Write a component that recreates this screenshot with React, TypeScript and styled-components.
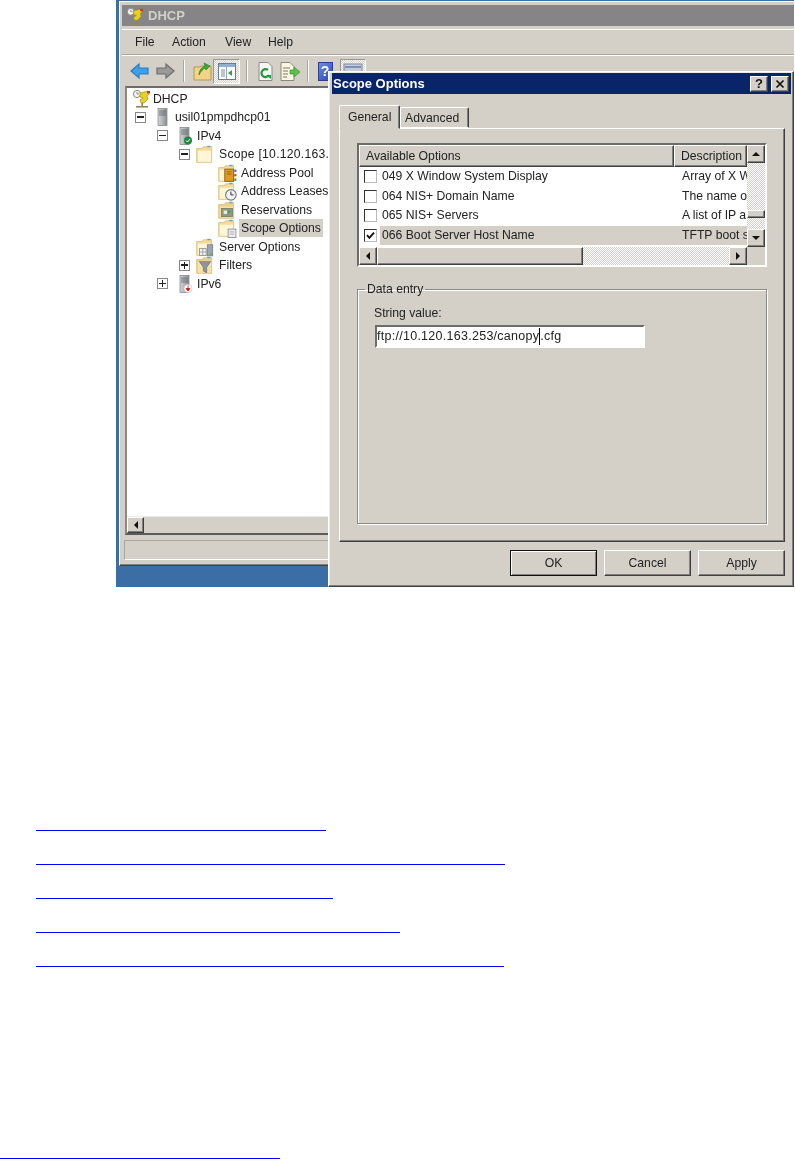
import React from 'react';
import styled, { createGlobalStyle, css } from 'styled-components';

const GlobalStyle = createGlobalStyle`
  html, body {
    margin: 0;
    padding: 0;
    background: #fff;
    overflow: hidden;
  }
`;

const FACE = '#d4d0c8';
const FONT = `'Liberation Sans', Arial, sans-serif`;

const raised = css`
  background: ${FACE};
  border: 1px solid;
  border-color: #fff #404040 #404040 #fff;
  box-shadow: inset -1px -1px #808080;
  box-sizing: border-box;
`;

const dithered = css`
  background-color: #fff;
  background-image: conic-gradient(#d4d0c8 25%, #fff 0 50%, #d4d0c8 0 75%, #fff 0);
  background-size: 2px 2px;
`;

const Page = styled.div`
  width: 795px;
  height: 1159px;
  font-family: ${FONT};
  color: #222;
`;

const Desktop = styled.div`
  position: relative;
  width: 678px;
  height: 587px;
  margin-left: 116px;
  background: #3a6ea5;
  overflow: hidden;
  filter: blur(0.4px);
`;

/* main console window */
const Window = styled.div`
  ${raised}
  position: absolute;
  left: 3px;
  top: 1px;
  width: 700px;
  height: 565px;
  padding: 3px 3px 3px 2px;
  display: flex;
  flex-direction: column;
`;

const WinTitle = styled.div`
  height: 21px;
  flex: none;
  background: #868486;
  color: ${FACE};
  font-size: 13px;
  font-weight: bold;
  display: flex;
  align-items: center;
  gap: 4px;
  padding-left: 4px;
`;

const MenuBar = styled.div`
  height: 26px;
  flex: none;
  margin-top: 3px;
  box-sizing: border-box;
  border-top: 1px solid #fff;
  border-bottom: 1px solid #a8a6a0;
  display: flex;
  align-items: center;
  padding-left: 13px;
  font-size: 12.2px;
`;

const MenuItem = styled.span<{ $w: number }>`
  width: ${({ $w }) => $w}px;
`;

const ToolBar = styled.div`
  height: 31px;
  flex: none;
  box-sizing: border-box;
  border-top: 1px solid #fff;
  display: flex;
  align-items: center;
  padding-left: 8px;
`;

const ToolSlot = styled.span<{ $w: number; $pressed?: boolean }>`
  width: ${({ $w }) => $w}px;
  height: 25px;
  flex: none;
  display: flex;
  align-items: center;
  justify-content: center;
  box-sizing: border-box;
  ${({ $pressed }) =>
    $pressed &&
    css`
      ${dithered}
      border: 1px solid;
      border-color: #9a9894 #fff #fff #9a9894;
    `}
`;

const ToolSep = styled.span<{ $l: number; $r: number }>`
  width: 2px;
  height: 22px;
  flex: none;
  margin: 0 ${({ $r }) => $r}px 0 ${({ $l }) => $l}px;
  background: #a8a6a0;
  border-right: 1px solid #fff;
  box-sizing: border-box;
`;

const HelpBook = styled.span`
  width: 15px;
  height: 19px;
  background: linear-gradient(135deg, #6c8ce8, #2a48b8);
  border: 1px solid #2c3e90;
  box-sizing: border-box;
  color: #fff;
  font-size: 14px;
  font-weight: bold;
  line-height: 17px;
  text-align: center;
`;

const TreePane = styled.div`
  flex: none;
  height: 449px;
  margin-left: 3px;
  box-sizing: border-box;
  background: #fff;
  border: 2px solid;
  border-color: #6e6c68 #fff #5a5a58 #8a8884;
  display: flex;
  flex-direction: column;
`;

const Tree = styled.div`
  flex: 1;
  padding: 1.7px 0 0 4px;
  font-size: 12.2px;
`;

const TreeRow = styled.div<{ $depth: number }>`
  height: 18.5px;
  padding-left: ${({ $depth }) => Math.max(0, $depth - 1) * 22}px;
  display: flex;
  align-items: center;
`;

const ExpanderSlot = styled.span`
  width: 22px;
  flex: none;
  display: flex;
  padding-left: 4px;
  box-sizing: border-box;
`;

const Expander = styled.span<{ $open: boolean }>`
  position: relative;
  width: 11px;
  height: 11px;
  box-sizing: border-box;
  border: 1px solid #8a8884;
  background: #fff;
  &::before {
    content: '';
    position: absolute;
    left: 1px;
    top: 3.5px;
    width: 7px;
    height: 1.5px;
    background: #222;
  }
  ${({ $open }) =>
    !$open &&
    css`
      &::after {
        content: '';
        position: absolute;
        left: 3.75px;
        top: 1px;
        width: 1.5px;
        height: 7px;
        background: #222;
      }
    `}
`;

const IconSlot = styled.span`
  width: 20px;
  flex: none;
  display: flex;
  justify-content: center;
`;

const TreeLabel = styled.span<{ $selected?: boolean; $wide?: boolean }>`
  padding: 2px 2px;
  white-space: nowrap;
  background: ${({ $selected }) => ($selected ? FACE : 'transparent')};
  letter-spacing: ${({ $wide }) => ($wide ? '0.25px' : 'normal')};
`;

const HScroll = styled.div`
  height: 17px;
  flex: none;
  background: ${FACE};
  display: flex;
  border-top: 1px solid #ecebe7;
  box-sizing: border-box;
`;

const ScrollBtn = styled.span<{ $w?: number; $h?: number }>`
  ${raised}
  width: ${({ $w }) => $w ?? 18}px;
  height: ${({ $h }) => $h ?? 18}px;
  flex: none;
  display: flex;
  align-items: center;
  justify-content: center;
`;

const Arrow = styled.span<{ $dir: 'left' | 'right' | 'up' | 'down' }>`
  width: 0;
  height: 0;
  border: 4px solid transparent;
  ${({ $dir }) =>
    $dir === 'left'
      ? 'border-right-color:#111;border-left-width:0;'
      : $dir === 'right'
        ? 'border-left-color:#111;border-right-width:0;'
        : $dir === 'up'
          ? 'border-bottom-color:#111;border-top-width:0;'
          : 'border-top-color:#111;border-bottom-width:0;'}
`;

const StatusBar = styled.div`
  height: 20px;
  flex: none;
  margin: 5px 0 0 2px;
  box-sizing: border-box;
  border: 1px solid;
  border-color: #a8a6a0 #fff #fff #a8a6a0;
`;

/* Scope Options dialog */
const Dialog = styled.div`
  ${raised}
  position: absolute;
  left: 212px;
  top: 71px;
  width: 466px;
  height: 516px;
  padding: 1px 2px 0 3px;
  box-shadow: inset -1px -1px #808080, inset 1px 1px #ecebe7;
`;

const DialogTitle = styled.div`
  height: 21px;
  background: #0a246a;
  color: #fff;
  font-size: 13px;
  font-weight: bold;
  display: flex;
  align-items: center;
  padding: 0 2px 0 1px;
`;

const TitleText = styled.span`
  flex: 1;
`;

const TitleBtn = styled.span`
  ${raised}
  width: 18px;
  height: 16px;
  margin-left: 3px;
  display: flex;
  align-items: center;
  justify-content: center;
  color: #111;
  font-size: 13px;
  font-weight: bold;
`;

const TabRow = styled.div`
  display: flex;
  align-items: flex-end;
  height: 23px;
  margin: 11px 0 0 7px;
  position: relative;
  z-index: 1;
`;

const Tab = styled.span<{ $active?: boolean }>`
  box-sizing: border-box;
  background: ${FACE};
  border: 1px solid;
  border-color: #fff #404040 ${FACE} #fff;
  border-radius: 2px 2px 0 0;
  box-shadow: inset -1px 0 #808080;
  font-size: 12.2px;
  display: flex;
  align-items: center;
  ${({ $active }) =>
    $active
      ? css`
          width: 61px;
          height: 24px;
          padding-left: 8px;
          margin-bottom: -1px;
        `
      : css`
          width: 69px;
          height: 21px;
          padding-left: 4px;
          border-bottom-color: #fff;
        `}
`;

const TabPanel = styled.div`
  width: 446px;
  height: 414px;
  margin-left: 7px;
  box-sizing: border-box;
  padding: 14px 0 0 17px;
  border: 1px solid;
  border-color: #fff #404040 #404040 #fff;
  box-shadow: inset -1px -1px #808080;
`;

const ListBox = styled.div`
  width: 410px;
  height: 124px;
  box-sizing: border-box;
  border: 2px solid;
  border-color: #6e6c68 #fff #fff #6e6c68;
  background: #fff;
  display: grid;
  grid-template-columns: 388px 18px;
  grid-template-rows: 1fr 18px;
  font-size: 12.2px;
`;

const ListBody = styled.div`
  overflow: hidden;
`;

const ListHead = styled.div`
  display: grid;
  grid-template-columns: 315px 1fr;
  height: 22px;
`;

const HeadCell = styled.span`
  ${raised}
  border-width: 1px;
  display: flex;
  align-items: center;
  padding-left: 6px;
  white-space: nowrap;
  overflow: hidden;
`;

const ListRow = styled.div`
  display: grid;
  grid-template-columns: 315px 1fr;
  height: 19.6px;
  align-items: center;
`;

const NameCell = styled.span`
  display: flex;
  align-items: center;
  padding-left: 5px;
  gap: 3px;
  white-space: nowrap;
`;

const NameText = styled.span<{ $selected?: boolean }>`
  flex: 1;
  line-height: 19.6px;
  background: ${({ $selected }) => ($selected ? FACE : 'transparent')};
  padding-left: 2px;
`;

const CheckBox = styled.span`
  width: 13px;
  height: 13px;
  flex: none;
  box-sizing: border-box;
  border: 1px solid #333;
  border-color: #333 #bbb #bbb #333;
  background: #fff;
  display: flex;
`;

const DescCell = styled.span<{ $selected?: boolean }>`
  padding-left: 8px;
  white-space: nowrap;
  overflow: hidden;
  line-height: 19.6px;
  background: ${({ $selected }) => ($selected ? FACE : 'transparent')};
`;

const VScroll = styled.div`
  ${dithered}
  display: flex;
  flex-direction: column;
  justify-content: space-between;
`;

const VThumb = styled.span`
  ${raised}
  display: block;
  height: 8px;
  margin-top: 47px;
`;

const VSpacer = styled.span`
  flex: 1;
`;

const ListHScroll = styled.div`
  ${dithered}
  display: flex;
  justify-content: space-between;
`;

const HThumb = styled.span`
  ${raised}
  display: block;
  width: 206px;
  height: 18px;
`;

const HLeft = styled.span`
  display: flex;
`;

const Corner = styled.div`
  background: ${FACE};
`;

const GroupBox = styled.fieldset`
  width: 410px;
  height: 242px;
  box-sizing: border-box;
  margin: 15px 0 0;
  padding: 0 0 0 16px;
  border: 1px solid #8c8a86;
  box-shadow: 1px 1px #fff, inset 1px 1px #fff;
  min-width: 0;
`;

const GroupLegend = styled.legend`
  margin-left: -9px;
  padding: 0 2px;
  font-size: 12.2px;
  line-height: 14px;
`;

const FieldLabel = styled.div`
  margin-top: 10px;
  font-size: 12.2px;
  line-height: 14px;
`;

const TextField = styled.div`
  width: 270px;
  height: 23px;
  margin: 5px 0 0 1px;
  box-sizing: border-box;
  border: 2px solid;
  border-color: #6e6c68 #fff #fff #6e6c68;
  background: #fff;
  font-size: 12.5px;
  letter-spacing: 0.27px;
  line-height: 19px;
  white-space: nowrap;
  display: flex;
`;

const Caret = styled.span`
  width: 1px;
  height: 17px;
  margin: 1px 0 0;
  background: #000;
`;

const ButtonRow = styled.div`
  display: flex;
  justify-content: flex-end;
  gap: 7px;
  margin-top: 8px;
  padding-right: 6px;
`;

const Button = styled.span<{ $primary?: boolean }>`
  ${raised}
  width: 87px;
  height: 26px;
  display: flex;
  align-items: center;
  justify-content: center;
  font-size: 12.2px;
  ${({ $primary }) =>
    $primary &&
    css`
      border-color: #111;
      box-shadow: inset 1px 1px #fff, inset -1px -1px #808080;
    `}
`;

/* the empty links below the picture: only their underlines are drawn */
const LinkList = styled.div`
  margin: 243px 0 0 36px;
  display: flex;
  flex-direction: column;
  gap: 33px;
`;

const Link = styled.a<{ $w: number }>`
  display: block;
  width: ${({ $w }) => $w}px;
  height: 1px;
  background: #0000ff;
`;

const FooterLink = styled(Link)`
  margin-top: 191px;
`;

const FolderSvg = styled.svg`
  width: 20px;
  height: 20px;
  flex: none;
  margin: -1px 0 -1px -4px;
`;

/* ---------- icons ---------- */

const DhcpIcon = ({ size = 19 }: { size?: number }) => (
  <svg width={size} height={size} viewBox="0 0 19 19">
    <circle cx="5" cy="5" r="3.6" fill="#f4f4f0" stroke="#8a8a82" />
    <path d="M5 3v2h2" stroke="#666" fill="none" strokeWidth=".7" />
    <path d="M8 4l8-2 1 3-2 2 1 3-4 4H9l-1-3 3-2-3-1z" fill="#e8d020" stroke="#9a8a10" strokeWidth=".6" />
    <rect x="15" y="2" width="3" height="2.5" fill="#c83a20" />
    <rect x="9.4" y="14" width="1.6" height="3" fill="#8a8a60" />
    <rect x="4" y="17" width="12" height="1.6" fill="#8c8c5c" />
  </svg>
);

const Server = ({ children }: { children?: React.ReactNode }) => (
  <svg width="16" height="18" viewBox="0 0 16 18">
    <defs>
      <linearGradient id="srv" x1="0" x2="1" y1="0" y2="0">
        <stop offset="0" stopColor="#d4d6da" />
        <stop offset="1" stopColor="#8b8f96" />
      </linearGradient>
    </defs>
    <rect x="3" y="0.5" width="9" height="17" fill="url(#srv)" stroke="#7c8086" strokeWidth=".7" />
    <path d="M4 3h7M4 5h7M4 7h7" stroke="#5e6268" strokeWidth=".8" />
    <circle cx="10.5" cy="15" r="1" fill="#58c040" />
    {children}
  </svg>
);

const Folder = ({ children, dark }: { children?: React.ReactNode; dark?: boolean }) => (
  <FolderSvg viewBox="0 0 18 18">
    <path d="M1.5 4h5l1-1.5h7.5v14H1.5z" fill={dark ? '#ecd08a' : '#f4dc98'} stroke="#d6bc78" strokeWidth=".7" />
    <path d="M2.5 6h12v10h-12z" fill={dark ? '#f6e2a8' : '#fff6d8'} />
    <rect x="11" y="1.6" width="3" height="1.3" fill="#5aa8dc" />
    {children}
  </FolderSvg>
);

const ArrowTool = ({ dir, fill, stroke }: { dir: 'left' | 'right'; fill: string; stroke: string }) => (
  <svg width="20" height="18" viewBox="0 0 20 18">
    <path
      d={dir === 'left' ? 'M1 9l8-7v4h9v6H9v4z' : 'M19 9l-8-7v4H2v6h9v4z'}
      fill={fill}
      stroke={stroke}
      strokeWidth="1.2"
    />
  </svg>
);

const UpFolderTool = () => (
  <svg width="20" height="20" viewBox="0 0 20 20">
    <path d="M1 6h6l1-1h10v14H1z" fill="#f2d488" stroke="#b8964c" />
    <path d="M6 14c0-5 3-8 6-9l-1-3 6 3-4 4-1-2c-2 1-4 3-6 7z" fill="#3aa838" stroke="#1e7a20" strokeWidth=".6" />
  </svg>
);

const PaneTool = () => (
  <svg width="18" height="17" viewBox="0 0 18 17">
    <rect x=".5" y=".5" width="17" height="16" fill="#fff" stroke="#6a7c90" />
    <rect x="1" y="1" width="16" height="3" fill="#8fb0d0" />
    <path d="M3 7h4M3 9h4M3 11h4M3 13h4" stroke="#7a8ea4" />
    <path d="M8.5 4v12" stroke="#9ab" />
    <path d="M14 7v6l-4-3z" fill="#30a040" />
  </svg>
);

const RefreshTool = () => (
  <svg width="17" height="19" viewBox="0 0 17 19">
    <path d="M2 .5h9l4 4v14H2z" fill="#f6f6f4" stroke="#8a8a88" />
    <path d="M12 13a4 4 0 1 1-1-5" fill="none" stroke="#1f9a3a" strokeWidth="2.2" />
    <path d="M9 13h5v4z" fill="#1f9a3a" />
  </svg>
);

const ExportTool = () => (
  <svg width="20" height="19" viewBox="0 0 20 19">
    <path d="M1 .5h9l4 4v14H1z" fill="#faf6e2" stroke="#8a8a78" />
    <path d="M3 6h7M3 9h5M3 12h5M3 15h4" stroke="#77786e" />
    <path d="M10 8h4V5l6 5-6 5v-3h-4z" fill="#5cc04a" stroke="#308c2a" strokeWidth=".6" />
  </svg>
);

const ConsoleTool = () => (
  <svg width="20" height="18" viewBox="0 0 20 18">
    <rect x="1" y="2" width="18" height="10" fill="#c0cce0" stroke="#7a88a4" />
    <path d="M2 5h16" stroke="#6a7896" strokeWidth="1.4" />
  </svg>
);

const CloseGlyph = () => (
  <svg width="10" height="10" viewBox="0 0 10 10">
    <path d="M1.5 1.5l7 7M8.5 1.5l-7 7" stroke="#111" strokeWidth="1.7" />
  </svg>
);

const Tick = () => (
  <svg width="11" height="11" viewBox="0 0 11 11">
    <path d="M2 5.2l2.4 2.6L9 2.6" fill="none" stroke="#111" strokeWidth="1.9" />
  </svg>
);

const Expand = ({ open }: { open: boolean }) => (
  <ExpanderSlot>
    <Expander $open={open} />
  </ExpanderSlot>
);

const treeRows: {
  depth: number;
  label: string;
  open?: boolean;
  icon: React.ReactNode;
  selected?: boolean;
  wide?: boolean;
}[] = [
  { depth: 0, label: 'DHCP', icon: <DhcpIcon /> },
  { depth: 1, label: 'usil01pmpdhcp01', open: true, icon: <Server /> },
  {
    depth: 2,
    label: 'IPv4',
    open: true,
    icon: (
      <Server>
        <circle cx="11" cy="13.5" r="4" fill="#1f8a3c" />
        <path d="M9 13.5l1.5 1.5 2.5-3" stroke="#fff" fill="none" />
      </Server>
    ),
  },
  { depth: 3, label: 'Scope [10.120.163.', open: true, wide: true, icon: <Folder /> },
  {
    depth: 4,
    label: 'Address Pool',
    icon: (
      <Folder>
        <rect x="7" y="5.5" width="8" height="11" fill="#dc9a1e" stroke="#8c5a10" strokeWidth=".8" />
        <path d="M9 8h4M9 10h4" stroke="#8c5a10" strokeWidth=".7" />
        <rect x="15.5" y="6" width="2" height="2" fill="#3a7ad0" />
        <rect x="15.5" y="10" width="2" height="2" fill="#d03a30" />
        <rect x="15.5" y="14" width="2" height="2" fill="#3aa040" />
      </Folder>
    ),
  },
  {
    depth: 4,
    label: 'Address Leases',
    icon: (
      <Folder>
        <circle cx="12.5" cy="12.5" r="4.7" fill="#f2f3f4" stroke="#6a7a8a" />
        <path d="M12.5 9.5v3h2.5" fill="none" stroke="#333" strokeWidth=".9" />
      </Folder>
    ),
  },
  {
    depth: 4,
    label: 'Reservations',
    icon: (
      <Folder dark>
        <rect x="4" y="7.5" width="10" height="7.5" fill="#8f9a84" stroke="#6a7060" strokeWidth=".6" />
        <rect x="6" y="9.5" width="3" height="3" fill="#e8f0e0" />
        <rect x="10" y="9.5" width="2" height="2" fill="#40a040" />
      </Folder>
    ),
  },
  {
    depth: 4,
    label: 'Scope Options',
    selected: true,
    icon: (
      <Folder>
        <rect x="10" y="10" width="7" height="7.5" fill="#eceef0" stroke="#8a8e94" strokeWidth=".8" />
        <path d="M11.5 12.5h4M11.5 14.5h4" stroke="#9a9ea4" strokeWidth=".7" />
      </Folder>
    ),
  },
  {
    depth: 3,
    label: 'Server Options',
    icon: (
      <Folder>
        <rect x="4" y="10.5" width="6" height="6" fill="#f4f4f4" stroke="#7b8694" strokeWidth=".7" />
        <path d="M4 13.5h6M7 10.5v6" stroke="#7b8694" strokeWidth=".6" />
        <rect x="11" y="7" width="5" height="10" fill="#9ba6b0" stroke="#687480" strokeWidth=".6" />
        <circle cx="14.5" cy="15.5" r="1" fill="#4cc040" />
      </Folder>
    ),
  },
  {
    depth: 3,
    label: 'Filters',
    open: false,
    icon: (
      <Folder dark>
        <path d="M4 6h10l-3.5 5v5l-3-1.5V11z" fill="#8e969c" stroke="#666e74" strokeWidth=".6" />
      </Folder>
    ),
  },
  {
    depth: 2,
    label: 'IPv6',
    open: false,
    icon: (
      <Server>
        <circle cx="11" cy="13.5" r="4" fill="#fff" stroke="#e0b0b0" strokeWidth=".6" />
        <path d="M11 10.5v4M9 13.5l2 2.5 2-2.5z" stroke="#c81818" fill="#c81818" strokeWidth=".8" />
      </Server>
    ),
  },
];

const options = [
  { name: '049 X Window System Display', desc: 'Array of X W' },
  { name: '064 NIS+ Domain Name', desc: 'The name o' },
  { name: '065 NIS+ Servers', desc: 'A list of IP a' },
  { name: '066 Boot Server Host Name', desc: 'TFTP boot s', checked: true },
];

const links = [290, 469, 297, 364, 468];

export default function App() {
  return (
    <Page>
      <GlobalStyle />
      <Desktop>
        <Window>
          <WinTitle>
            <DhcpIcon size={18} />
            DHCP
          </WinTitle>
          <MenuBar>
            <MenuItem $w={37}>File</MenuItem>
            <MenuItem $w={53}>Action</MenuItem>
            <MenuItem $w={43}>View</MenuItem>
            <MenuItem $w={40}>Help</MenuItem>
          </MenuBar>
          <ToolBar>
            <ToolSlot $w={20}>
              <ArrowTool dir="left" fill="#3f9fe8" stroke="#2a7cc0" />
            </ToolSlot>
            <ToolSlot $w={5} />
            <ToolSlot $w={20}>
              <ArrowTool dir="right" fill="#9a9a98" stroke="#6c6c6a" />
            </ToolSlot>
            <ToolSep $l={8} $r={8} />
            <ToolSlot $w={20}>
              <UpFolderTool />
            </ToolSlot>
            <ToolSlot $w={27} $pressed>
              <PaneTool />
            </ToolSlot>
            <ToolSep $l={6} $r={9} />
            <ToolSlot $w={17}>
              <RefreshTool />
            </ToolSlot>
            <ToolSlot $w={6} />
            <ToolSlot $w={20}>
              <ExportTool />
            </ToolSlot>
            <ToolSep $l={7} $r={7} />
            <ToolSlot $w={18}>
              <HelpBook>?</HelpBook>
            </ToolSlot>
            <ToolSlot $w={6} />
            <ToolSlot $w={26} $pressed>
              <ConsoleTool />
            </ToolSlot>
          </ToolBar>
          <TreePane>
            <Tree>
              {treeRows.map((row) => (
                <TreeRow key={row.label} $depth={row.depth}>
                  {row.depth > 0 && (row.open === undefined ? <ExpanderSlot /> : <Expand open={row.open} />)}
                  <IconSlot>{row.icon}</IconSlot>
                  <TreeLabel $selected={row.selected} $wide={row.wide}>
                    {row.label}
                  </TreeLabel>
                </TreeRow>
              ))}
            </Tree>
            <HScroll>
              <ScrollBtn $w={17} $h={16}>
                <Arrow $dir="left" />
              </ScrollBtn>
            </HScroll>
          </TreePane>
          <StatusBar />
        </Window>

        <Dialog>
          <DialogTitle>
            <TitleText>Scope Options</TitleText>
            <TitleBtn>?</TitleBtn>
            <TitleBtn>
              <CloseGlyph />
            </TitleBtn>
          </DialogTitle>
          <TabRow>
            <Tab $active>General</Tab>
            <Tab>Advanced</Tab>
          </TabRow>
          <TabPanel>
            <ListBox>
              <ListBody>
                <ListHead>
                  <HeadCell>Available Options</HeadCell>
                  <HeadCell>Description</HeadCell>
                </ListHead>
                {options.map((o) => (
                  <ListRow key={o.name}>
                    <NameCell>
                      <CheckBox>{o.checked && <Tick />}</CheckBox>
                      <NameText $selected={o.checked}>{o.name}</NameText>
                    </NameCell>
                    <DescCell $selected={o.checked}>{o.desc}</DescCell>
                  </ListRow>
                ))}
              </ListBody>
              <VScroll>
                <ScrollBtn $h={18}>
                  <Arrow $dir="up" />
                </ScrollBtn>
                <VThumb />
                <VSpacer />
                <ScrollBtn $h={18}>
                  <Arrow $dir="down" />
                </ScrollBtn>
              </VScroll>
              <ListHScroll>
                <HLeft>
                  <ScrollBtn>
                    <Arrow $dir="left" />
                  </ScrollBtn>
                  <HThumb />
                </HLeft>
                <ScrollBtn>
                  <Arrow $dir="right" />
                </ScrollBtn>
              </ListHScroll>
              <Corner />
            </ListBox>
            <GroupBox>
              <GroupLegend>Data entry</GroupLegend>
              <FieldLabel>String value:</FieldLabel>
              <TextField>
                ftp://10.120.163.253/canopy
                <Caret />
                .cfg
              </TextField>
            </GroupBox>
          </TabPanel>
          <ButtonRow>
            <Button $primary>OK</Button>
            <Button>Cancel</Button>
            <Button>Apply</Button>
          </ButtonRow>
        </Dialog>
      </Desktop>

      <LinkList>
        {links.map((w, i) => (
          <Link key={i} href="#" $w={w} />
        ))}
      </LinkList>
      <FooterLink href="#" $w={280} />
    </Page>
  );
}
